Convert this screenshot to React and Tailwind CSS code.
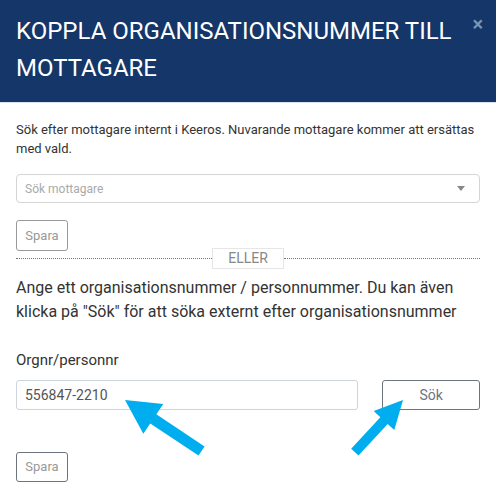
import React from 'react';

function Arrow({ x, y, angle, len, headLen, headW, shaftW }) {
  const pts = [
    [0, 0],
    [headLen, -headW],
    [headLen, -shaftW],
    [len, -shaftW],
    [len, shaftW],
    [headLen, shaftW],
    [headLen, headW],
  ].map((p) => p.join(',')).join(' ');
  return <polygon points={pts} fill="#00aeef" transform={`translate(${x} ${y}) rotate(${angle})`} />;
}

export default function App() {
  return (
    <div className="relative w-[496px] h-[496px] overflow-hidden bg-white font-['Roboto',sans-serif] text-[#333]">
      <div className="relative h-[103px] bg-[#143668] border-b border-[#dbe3ee] pl-4 pr-6 pt-[13px]">
        <h1 className="text-[24px] leading-[37px] font-normal text-white">
          KOPPLA ORGANISATIONSNUMMER TILL MOTTAGARE
        </h1>
        <button className="absolute right-[13px] top-[14px] text-[20px] leading-none font-bold text-[#7f93b0]">×</button>
      </div>

      <div className="px-4 pt-[17px]">
        <p className="text-[13px] leading-[19px] text-[#333]">
          Sök efter mottagare internt i Keeros. Nuvarande mottagare kommer att ersättas med vald.
        </p>

        <div className="mt-4 h-[29px] flex items-center justify-between border border-[#d4d4d4] rounded-[4px] pl-[8px] pr-[14px]">
          <span className="text-[12px] text-[#aaaaaa]">Sök mottagare</span>
          <span className="w-0 h-0 border-l-[4px] border-r-[4px] border-t-[5px] border-l-transparent border-r-transparent border-t-[#888]" />
        </div>

        <button className="mt-[17px] h-[31px] w-[52px] border border-[#999] rounded-[3px] text-[13px] text-[#999]">
          Spara
        </button>

        <div className="-mt-[3px] h-[21px] flex items-center">
          <div className="flex-1 border-t border-dotted border-[#777]" />
          <div className="w-[72px] h-[21px] border border-[#e6e6e6] bg-white flex items-center justify-center text-[14px] text-[#888]">
            ELLER
          </div>
          <div className="flex-1 border-t border-dotted border-[#777]" />
        </div>

        <p className="mt-[7px] text-[16px] leading-[24px] text-[#333]">
          Ange ett organisationsnummer / personnummer. Du kan även klicka på "Sök" för att söka externt efter organisationsnummer
        </p>

        <div className="mt-[24px] text-[15px] leading-[24px] text-[#333]">Orgnr/personnr</div>

        <div className="mt-2 flex items-center gap-[24px]">
          <div className="w-[344px] h-[30px] border border-[#ced4da] rounded-[3px] flex items-center px-[8px] text-[14px] text-[#555]">
            556847-2210
          </div>
          <button className="w-[98px] h-[30px] border border-[#6c757d] rounded-[3px] text-[14px] text-[#6c757d]">
            Sök
          </button>
        </div>

        <button className="mt-[42px] h-[30px] w-[52px] border border-[#6c757d] rounded-[3px] text-[13px] text-[#999]">
          Spara
        </button>
      </div>

      <svg className="absolute inset-0 pointer-events-none" width="496" height="496">
        <Arrow x={125} y={400} angle={33.7} len={92} headLen={34} headW={18} shaftW={5.5} />
        <Arrow x={403} y={400} angle={132.7} len={71} headLen={28} headW={14} shaftW={5} />
      </svg>
    </div>
  );
}
